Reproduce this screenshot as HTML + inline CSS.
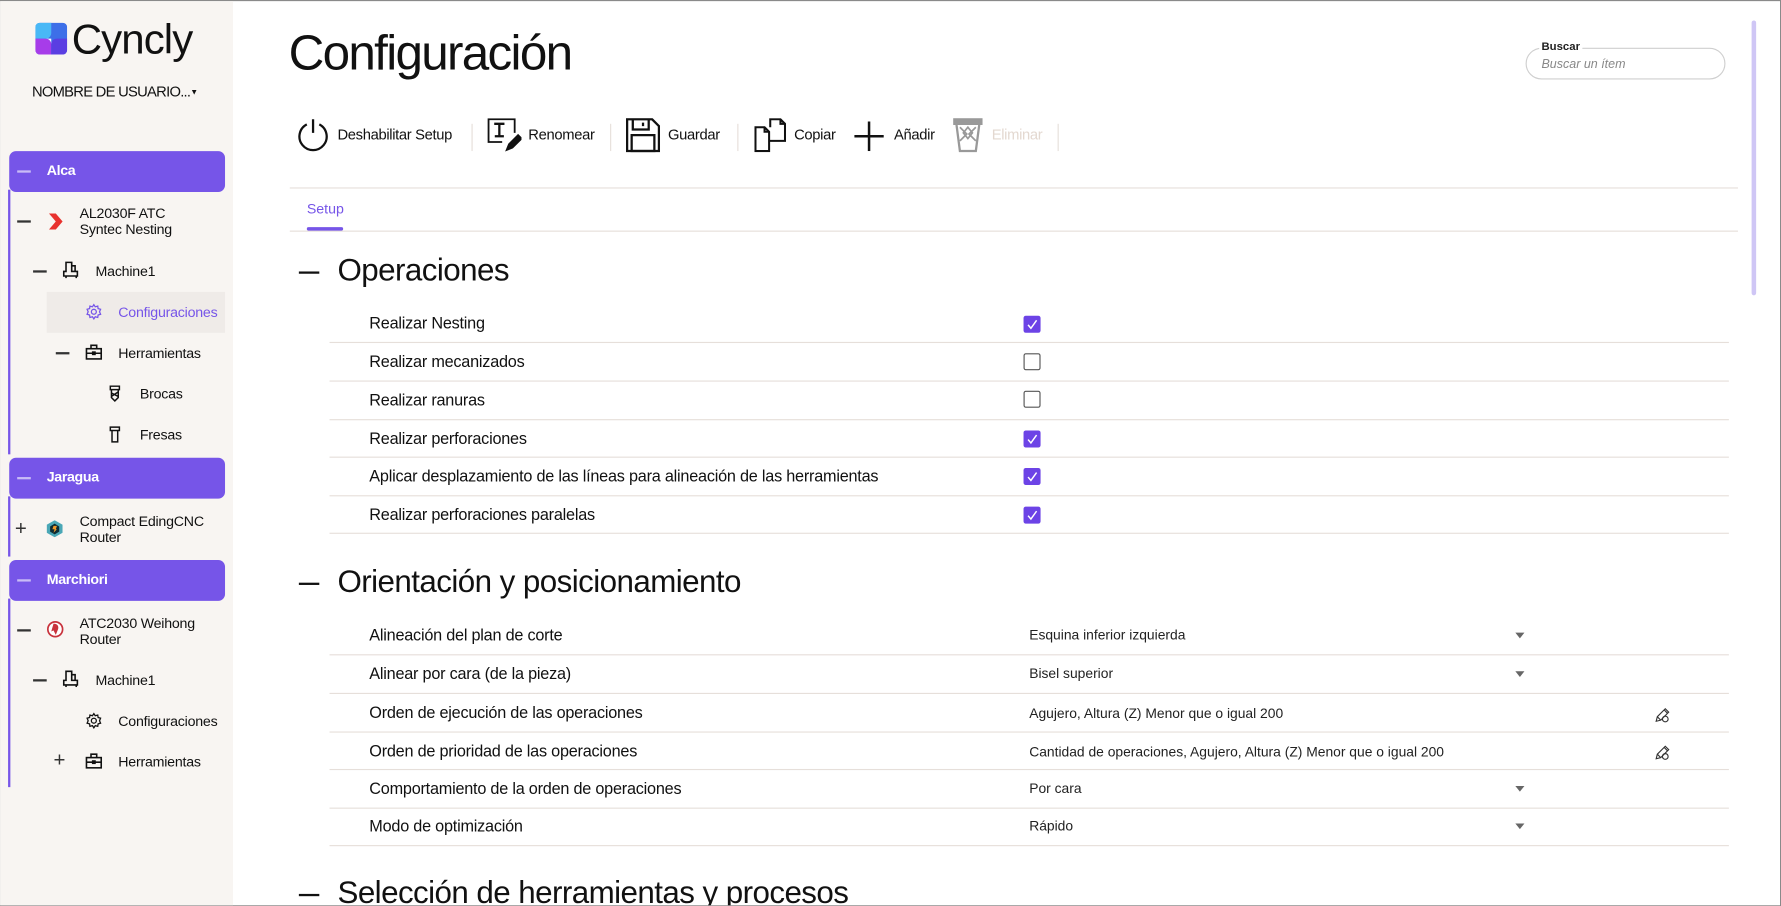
<!DOCTYPE html>
<html><head><meta charset="utf-8">
<style>
*{box-sizing:border-box;margin:0;padding:0}
html,body{width:1781px;height:905px;overflow:hidden;background:#fff;font-family:"Liberation Sans",sans-serif;color:#111}
#w{position:absolute;left:-1px;top:0;width:1569px;height:798px;transform:scale(1.13584);transform-origin:0 0;border:1px solid #8a8a8a;overflow:hidden;background:#fff}
.a{position:absolute;white-space:nowrap}
#side{position:absolute;left:0;top:0;width:205px;height:797px;background:#f8f5f2}
.grp{position:absolute;left:8px;width:190px;height:36px;background:#7655e8;border-radius:6px;color:#fff;font-size:12.5px;font-weight:bold;letter-spacing:-0.3px}
.grp .d{position:absolute;left:7px;top:17px;width:12px;height:2px;background:#c9bcf6}
.grp span{position:absolute;left:33px;top:10px}
.vl{position:absolute;left:7px;width:2px;background:#7655e8}
.st{font-size:12.5px;color:#111;letter-spacing:-0.2px;line-height:14px}
.dash{position:absolute;height:1.5px;width:12px;background:#333}
.row{position:absolute;left:290px;width:1232px;border-bottom:1px solid #e6dfda}
.lbl{position:absolute;left:35px;font-size:14.3px;letter-spacing:-0.2px;color:#111;margin-top:1px}
.cb{position:absolute;left:611px;width:15px;height:15px;border-radius:2px}
.on{background:#6c43e6}
.off{border:1.5px solid #555}
.val{position:absolute;left:616px;font-size:12.2px;color:#222;margin-top:1px}
.arr{position:absolute;left:1044px;width:0;height:0;border-left:4.5px solid transparent;border-right:4.5px solid transparent;border-top:5px solid #666}
.h2{position:absolute;left:297px;font-size:27.6px;letter-spacing:-0.5px;color:#111;margin-top:1px}
.hd{position:absolute;left:263px;width:18px;height:2px;background:#111}
.tb{position:absolute;top:110px;font-size:13px;letter-spacing:-0.3px;color:#111}
.sep{position:absolute;top:108px;width:1px;height:24px;background:#e6dfda}
</style></head><body>
<div id="w">
<div id="side">
  <svg class="a" style="left:31px;top:19px" width="28" height="28" viewBox="0 0 28 28">
    <rect x="0" y="0" width="28" height="28" rx="4" fill="#3d6fe8"/>
    <path d="M4 0h10v9a5 5 0 0 1-5 5H0V4a4 4 0 0 1 4-4z" fill="#49b8f6"/>
    <path d="M0 14h9a5 5 0 0 1 5 5v9H4a4 4 0 0 1-4-4z" fill="#a73ce9"/>
    <path d="M14 19a5 5 0 0 1 5-5h9v10a4 4 0 0 1-4 4H14z" fill="#5b3ee2"/>
    <path d="M9 14h5v5a5 5 0 0 0-5-5z" fill="#fff"/>
  </svg>
  <div class="a" style="left:63px;top:13px;font-size:37px;letter-spacing:-0.8px;color:#111">Cyncly</div>
  <div class="a" style="left:28px;top:72px;font-size:13px;letter-spacing:-0.65px">NOMBRE DE USUARIO...<span style="font-size:7px;vertical-align:2px">▼</span></div>

  <div class="grp" style="top:132px"><div class="d"></div><span>Alca</span></div>
  <div class="vl" style="top:166px;height:233px"></div>
  <div class="dash" style="left:15px;top:193px"></div>
  <svg class="a" style="left:42px;top:186px" width="14" height="16" viewBox="0 0 14 16"><path d="M1 1h6l6 7-6 7H1l6-7z" fill="#e8322e"/></svg>
  <div class="a st" style="left:70px;top:180px">AL2030F ATC<br>Syntec Nesting</div>
  <div class="dash" style="left:29px;top:237px"></div>
  <svg class="a" style="left:55px;top:229px" width="15" height="15" viewBox="0 0 15 15" fill="none" stroke="#111" stroke-width="1.4"><path d="M3 1h5v8h5v4H1v-4h2zM8 4h3v5"/><path d="M3 13v2M12 13v2"/></svg>
  <div class="a st" style="left:84px;top:231px">Machine1</div>
  <div class="a" style="left:41px;top:256px;width:157px;height:36px;background:#efebe8"></div>
  <svg class="a" style="left:75px;top:266px" width="15" height="15" viewBox="0 0 24 24" fill="none" stroke="#7655e8" stroke-width="1.8"><circle cx="12" cy="12" r="3.5"/><path d="M12 2l2 3 3.5-1 .5 3.5 3.5 1-1.5 3.5 1.5 3.5-3.5 1-.5 3.5-3.5-1-2 3-2-3-3.5 1-.5-3.5-3.5-1L4 12 2.5 8.5 6 7.5 6.5 4 10 5z"/></svg>
  <div class="a st" style="left:104px;top:267px;color:#7655e8">Configuraciones</div>
  <div class="dash" style="left:49px;top:309px"></div>
  <svg class="a" style="left:75px;top:302px" width="15" height="14" viewBox="0 0 15 14" fill="none" stroke="#111" stroke-width="1.4"><rect x="1" y="4" width="13" height="9"/><path d="M5 4V1h5v3M1 8h13"/><rect x="6.5" y="7" width="2" height="2" fill="#111"/></svg>
  <div class="a st" style="left:104px;top:303px">Herramientas</div>
  <svg class="a" style="left:96px;top:338px" width="10" height="15" viewBox="0 0 10 15" fill="none" stroke="#111" stroke-width="1.3"><path d="M1 1h8v3H1zM2 4v7l3 3 3-3V4M2 7l6 3M2 10l6-4"/></svg>
  <div class="a st" style="left:123px;top:339px">Brocas</div>
  <svg class="a" style="left:96px;top:374px" width="10" height="15" viewBox="0 0 10 15" fill="none" stroke="#111" stroke-width="1.3"><path d="M1 1h8v3H1zM2.5 4v10h5V4"/></svg>
  <div class="a st" style="left:123px;top:375px">Fresas</div>

  <div class="grp" style="top:402px"><div class="d"></div><span>Jaragua</span></div>
  <div class="vl" style="top:436px;height:53px"></div>
  <div class="a" style="left:13px;top:456px;font-size:18px;line-height:16px;color:#333">+</div>
  <svg class="a" style="left:41px;top:457px" width="14" height="15" viewBox="0 0 14 15"><path d="M7 0l7 4v7l-7 4-7-4V4z" fill="#4aa7b6"/><path d="M7 3l4 2.5v4.5L7 12.5 3 10V5.5z" fill="#0d2b33"/><path d="M6 5h3l-1 3h1l-3 3 1-3H5z" fill="#f29b2a"/></svg>
  <div class="a st" style="left:70px;top:451px">Compact EdingCNC<br>Router</div>

  <div class="grp" style="top:492px"><div class="d"></div><span>Marchiori</span></div>
  <div class="vl" style="top:526px;height:166px"></div>
  <div class="dash" style="left:15px;top:553px"></div>
  <svg class="a" style="left:41px;top:545px" width="15" height="16" viewBox="0 0 15 16"><circle cx="7.5" cy="8" r="6.5" fill="#fff" stroke="#c8323c" stroke-width="1.5"/><path d="M6 3c3 0 5 2 4 5l-2 5-2-4-2 1z" fill="#c8323c"/></svg>
  <div class="a st" style="left:70px;top:541px">ATC2030 Weihong<br>Router</div>
  <div class="dash" style="left:29px;top:597px"></div>
  <svg class="a" style="left:55px;top:589px" width="15" height="15" viewBox="0 0 15 15" fill="none" stroke="#111" stroke-width="1.4"><path d="M3 1h5v8h5v4H1v-4h2zM8 4h3v5"/><path d="M3 13v2M12 13v2"/></svg>
  <div class="a st" style="left:84px;top:591px">Machine1</div>
  <svg class="a" style="left:75px;top:626px" width="15" height="15" viewBox="0 0 24 24" fill="none" stroke="#111" stroke-width="1.8"><circle cx="12" cy="12" r="3.5"/><path d="M12 2l2 3 3.5-1 .5 3.5 3.5 1-1.5 3.5 1.5 3.5-3.5 1-.5 3.5-3.5-1-2 3-2-3-3.5 1-.5-3.5-3.5-1L4 12 2.5 8.5 6 7.5 6.5 4 10 5z"/></svg>
  <div class="a st" style="left:104px;top:627px">Configuraciones</div>
  <div class="a" style="left:47px;top:660px;font-size:18px;line-height:16px;color:#333">+</div>
  <svg class="a" style="left:75px;top:662px" width="15" height="14" viewBox="0 0 15 14" fill="none" stroke="#111" stroke-width="1.4"><rect x="1" y="4" width="13" height="9"/><path d="M5 4V1h5v3M1 8h13"/><rect x="6.5" y="7" width="2" height="2" fill="#111"/></svg>
  <div class="a st" style="left:104px;top:663px">Herramientas</div>
</div>

<div class="a" style="left:254px;top:22px;font-size:43.5px;letter-spacing:-1.5px;color:#111">Configuración</div>

<div class="a" style="left:1343px;top:41px;width:176px;height:28px;border:1px solid #cfcfcf;border-radius:14px"></div>
<div class="a" style="left:1355px;top:35px;padding:0 2px;background:#fff;font-size:10px;font-weight:bold;color:#222">Buscar</div>
<div class="a" style="left:1357px;top:50px;font-size:11px;font-style:italic;color:#888">Buscar un ítem</div>

<svg class="a" style="left:261px;top:103px" width="29" height="30" viewBox="0 0 29 30" fill="none" stroke="#111" stroke-width="2"><path d="M9 5.5A12 12 0 1 0 20 5.5"/><path d="M14.5 1v12"/></svg>
<div class="tb" style="left:297px">Deshabilitar Setup</div>
<div class="sep" style="left:415px"></div>
<svg class="a" style="left:429px;top:103px" width="30" height="30" viewBox="0 0 30 30" fill="none" stroke="#111" stroke-width="1.6"><path d="M24 13V1H1v20h12"/><path d="M6 5h9M10.5 5v11M6.5 16h8" stroke-width="2"/><path d="M17 28l2-5 8-8 3 3-8 8z" fill="#111"/></svg>
<div class="tb" style="left:465px">Renomear</div>
<div class="sep" style="left:537px"></div>
<svg class="a" style="left:551px;top:103px" width="30" height="30" viewBox="0 0 30 30" fill="none" stroke="#111" stroke-width="2"><path d="M1 1h22l6 6v22H1z"/><path d="M6 1v9h14V1M15 4v3M5 15h20v14H5z"/></svg>
<div class="tb" style="left:588px">Guardar</div>
<div class="sep" style="left:649px"></div>
<svg class="a" style="left:664px;top:103px" width="28" height="30" viewBox="0 0 28 30" fill="none" stroke="#111" stroke-width="1.8"><path d="M1 8h8l4 4v17H1z"/><path d="M9 8v4h4"/><path d="M13 20h14V5l-4-4h-9v7"/><path d="M23 1v4h4"/></svg>
<div class="tb" style="left:699px">Copiar</div>
<svg class="a" style="left:752px;top:106px" width="26" height="26" viewBox="0 0 26 26" stroke="#111" stroke-width="2.2"><path d="M13 0v26M0 13h26"/></svg>
<div class="tb" style="left:787px">Añadir</div>
<svg class="a" style="left:839px;top:103px" width="26" height="30" viewBox="0 0 26 30" fill="none" stroke="#999" stroke-width="2"><path d="M1 1h24v4H1z" fill="#999"/><path d="M3 6l3 23h14l3-23"/><path d="M6 8l6 6-6 6M20 8l-6 6 6 6M13 8l4 5-4 5-4-5z" stroke-width="1.5"/></svg>
<div class="tb" style="left:873px;color:#e3d8d0">Eliminar</div>
<div class="sep" style="left:931px"></div>

<div class="a" style="left:255px;top:164px;width:1275px;height:1px;background:#e6dfda"></div>
<div class="a" style="left:270px;top:176px;font-size:12.5px;color:#7655e8">Setup</div>
<div class="a" style="left:255px;top:202px;width:1275px;height:1px;background:#e6dfda"></div>
<div class="a" style="left:270px;top:199px;width:32px;height:3px;background:#7655e8;border-radius:2px"></div>

<div class="hd" style="top:238px"></div>
<div class="h2" style="top:220px">Operaciones</div>
<div class="row" style="top:267px;height:34px"><div class="lbl" style="top:8px">Realizar Nesting</div><div class="cb on" style="top:10px"><svg width="15" height="15"><path d="M4 8l2.5 3L11.5 4" fill="none" stroke="#fff" stroke-width="1.3"/></svg></div></div>
<div class="row" style="top:301px;height:34px"><div class="lbl" style="top:8px">Realizar mecanizados</div><div class="cb off" style="top:9px"></div></div>
<div class="row" style="top:335px;height:34px"><div class="lbl" style="top:8px">Realizar ranuras</div><div class="cb off" style="top:8px"></div></div>
<div class="row" style="top:369px;height:33px"><div class="lbl" style="top:8px">Realizar perforaciones</div><div class="cb on" style="top:9px"><svg width="15" height="15"><path d="M4 8l2.5 3L11.5 4" fill="none" stroke="#fff" stroke-width="1.3"/></svg></div></div>
<div class="row" style="top:402px;height:34px"><div class="lbl" style="top:8px">Aplicar desplazamiento de las líneas para alineación de las herramientas</div><div class="cb on" style="top:9px"><svg width="15" height="15"><path d="M4 8l2.5 3L11.5 4" fill="none" stroke="#fff" stroke-width="1.3"/></svg></div></div>
<div class="row" style="top:436px;height:33px"><div class="lbl" style="top:8px">Realizar perforaciones paralelas</div><div class="cb on" style="top:9px"><svg width="15" height="15"><path d="M4 8l2.5 3L11.5 4" fill="none" stroke="#fff" stroke-width="1.3"/></svg></div></div>

<div class="hd" style="top:512px"></div>
<div class="h2" style="top:494px">Orientación y posicionamiento</div>
<div class="row" style="top:541px;height:35px"><div class="lbl" style="top:9px">Alineación del plan de corte</div><div class="val" style="top:9px">Esquina inferior izquierda</div><div class="arr" style="top:15px"></div></div>
<div class="row" style="top:576px;height:34px"><div class="lbl" style="top:8px">Alinear por cara (de la pieza)</div><div class="val" style="top:8px">Bisel superior</div><div class="arr" style="top:14px"></div></div>
<div class="row" style="top:610px;height:34px"><div class="lbl" style="top:8px">Orden de ejecución de las operaciones</div><div class="val" style="top:9px">Agujero, Altura (Z) Menor que o igual 200</div>
<svg class="a" style="left:1166px;top:11px" width="15" height="15" viewBox="0 0 15 15" fill="none" stroke="#333" stroke-width="1"><path d="M2 13l1-4 7-7 3 3-7 7z"/><path d="M3 9l3 3M9 3l3 3"/><circle cx="10" cy="11" r="2.5"/></svg></div>
<div class="row" style="top:644px;height:33px"><div class="lbl" style="top:8px">Orden de prioridad de las operaciones</div><div class="val" style="top:9px">Cantidad de operaciones, Agujero, Altura (Z) Menor que o igual 200</div>
<svg class="a" style="left:1166px;top:10px" width="15" height="15" viewBox="0 0 15 15" fill="none" stroke="#333" stroke-width="1"><path d="M2 13l1-4 7-7 3 3-7 7z"/><path d="M3 9l3 3M9 3l3 3"/><circle cx="10" cy="11" r="2.5"/></svg></div>
<div class="row" style="top:677px;height:34px"><div class="lbl" style="top:8px">Comportamiento de la orden de operaciones</div><div class="val" style="top:8px">Por cara</div><div class="arr" style="top:14px"></div></div>
<div class="row" style="top:711px;height:33px"><div class="lbl" style="top:7px">Modo de optimización</div><div class="val" style="top:7px">Rápido</div><div class="arr" style="top:13px"></div></div>

<div class="hd" style="top:786px"></div>
<div class="h2" style="top:768px">Selección de herramientas y procesos</div>

<div class="a" style="left:1542px;top:17px;width:4px;height:242px;background:#cfc6f5;border-radius:2px"></div>
</div>
</body></html>
